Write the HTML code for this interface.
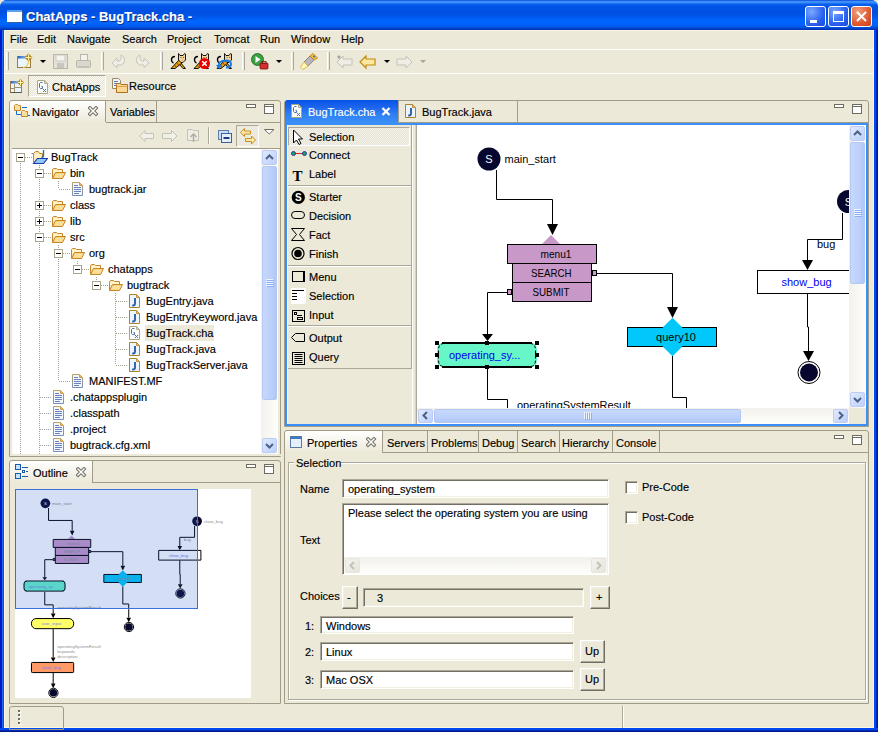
<!DOCTYPE html>
<html><head><meta charset="utf-8">
<style>
*{margin:0;padding:0;box-sizing:border-box}
html,body{width:878px;height:732px;overflow:hidden;background:#ECE9D8}
body{font-family:"Liberation Sans",sans-serif;font-size:11px;color:#000;position:relative}
.a{position:absolute}
.t{position:absolute;white-space:nowrap;line-height:13px;-webkit-text-stroke:0.15px currentColor}
</style></head><body>

<!-- window frame -->
<div class="a" style="left:0;top:0;width:878px;height:732px;background:#0A50E0;border-radius:7px 7px 0 0"></div>
<div class="a" style="left:0;top:0;width:878px;height:30px;border-radius:7px 7px 0 0;background:linear-gradient(#0A48DA 0px,#3C8EF8 1.5px,#3C8EF8 2.5px,#0A64F0 4px,#0055E6 6px,#0050E0 13px,#0058EE 17px,#0066FE 21px,#0062FA 25px,#0050DC 27.5px,#0034B8 29.5px,#0034B8 30px)"></div>
<div class="a" style="left:0;top:30px;width:4px;height:702px;background:linear-gradient(90deg,#0018C8 0 2px,#1C6EF0 2px 3px,#0050E0 3px 4px)"></div>
<div class="a" style="left:874px;top:30px;width:4px;height:702px;background:linear-gradient(90deg,#0048F0 0 2px,#0028B8 2px 3px,#001888 3px 4px)"></div>
<div class="a" style="left:0;top:728px;width:878px;height:4px;background:linear-gradient(#0048F0 0 2px,#0028B8 2px 3px,#001888 3px 4px)"></div>
<div class="a" style="left:4px;top:30px;width:870px;height:698px;background:#ECE9D8;border:1px solid #FFF6E0"></div>

<!-- title -->
<div class="a" style="left:7px;top:10px;width:15px;height:12px;background:#fff;border-top:2px solid #5AA0F0;box-shadow:1px 1px 0 #3060a0"></div>
<div class="t" style="left:26px;top:9px;font-size:13px;font-weight:bold;color:#fff;text-shadow:1px 1px 0 #0A2A80;line-height:15px">ChatApps - BugTrack.cha -</div>
<!-- title buttons -->
<div class="a" style="left:805px;top:6px;width:21px;height:21px;border:1px solid #fff;border-radius:3px;background:radial-gradient(circle at 30% 25%,#7AA8FF,#2A62F0 60%,#1A4AD8)"></div>
<div class="a" style="left:810px;top:20px;width:7px;height:3px;background:#fff"></div>
<div class="a" style="left:828px;top:6px;width:21px;height:21px;border:1px solid #fff;border-radius:3px;background:radial-gradient(circle at 30% 25%,#7AA8FF,#2A62F0 60%,#1A4AD8)"></div>
<div class="a" style="left:833px;top:11px;width:11px;height:11px;border:1px solid #fff;border-top-width:3px"></div>
<div class="a" style="left:851px;top:6px;width:21px;height:21px;border:1px solid #fff;border-radius:3px;background:radial-gradient(circle at 30% 25%,#F0A080,#E05A30 60%,#C84018)"></div>
<svg class="a" style="left:851px;top:6px" width="21" height="21"><path d="M6 6 L15 15 M15 6 L6 15" stroke="#fff" stroke-width="2"/></svg>

<!-- menu bar -->
<div class="a" style="left:4px;top:49px;width:870px;height:1px;background:#fff"></div>
<div class="t" style="left:10px;top:33px">File</div>
<div class="t" style="left:37px;top:33px">Edit</div>
<div class="t" style="left:67px;top:33px">Navigate</div>
<div class="t" style="left:122px;top:33px">Search</div>
<div class="t" style="left:167px;top:33px">Project</div>
<div class="t" style="left:214px;top:33px">Tomcat</div>
<div class="t" style="left:260px;top:33px">Run</div>
<div class="t" style="left:291px;top:33px">Window</div>
<div class="t" style="left:341px;top:33px">Help</div>

<!-- toolbar -->
<div class="a" style="left:4px;top:73px;width:870px;height:1px;background:#fff"></div>


<!-- toolbar items -->
<div class="a" style="left:6px;top:52px;width:3px;height:18px;border-left:1px solid #fff;border-right:1px solid #ACA899"></div>
<svg class="a" style="left:16px;top:53px" width="17" height="16"><defs><linearGradient id="nwg" x1="0" x2="1"><stop offset="0" stop-color="#2A66C0"/><stop offset="1" stop-color="#B0D4F8"/></linearGradient></defs><rect x="1.5" y="3.5" width="13" height="11" fill="#EAF6FC" stroke="#9A7A40"/><rect x="2" y="3" width="12" height="2.5" fill="url(#nwg)"/><path d="M12.5 8 Q12.5 13.5 7 14.5" stroke="#F8D050" fill="none" stroke-width="1.2"/><path d="M12.5 0.5 L16.5 4.5 L12.5 8.5 L8.5 4.5Z" fill="#B88A10"/><path d="M12.5 1.5 V7.5 M9.5 4.5 H15.5" stroke="#FFF0B0"/></svg>
<svg class="a" style="left:40px;top:60px" width="7" height="4"><path d="M0 0 L6 0 L3 3Z" fill="#000"/></svg>
<svg class="a" style="left:53px;top:54px" width="16" height="16"><rect x="0.5" y="0.5" width="14" height="14" fill="#E4E2D8" stroke="#B8B6AC"/><rect x="3" y="1" width="9" height="6" fill="#F4F3EE" stroke="#C4C2B8" stroke-width="0.8"/><rect x="4" y="9" width="7" height="5" fill="#C8C6BC"/></svg>
<svg class="a" style="left:76px;top:54px" width="16" height="16"><rect x="4.5" y="0.5" width="7" height="6" fill="#F4F3EE" stroke="#B8B6AC"/><rect x="0.5" y="6.5" width="14" height="7" rx="1" fill="#DAD8CE" stroke="#B8B6AC"/><rect x="2" y="12" width="11" height="2" fill="#C4C2B8"/></svg>
<div class="a" style="left:101px;top:52px;width:3px;height:18px;border-left:1px solid #fff;border-right:1px solid #ACA899"></div>
<svg class="a" style="left:111px;top:54px" width="16" height="16"><path d="M10 1 Q15 3 13 9 Q11 12 6 11 L6 14 L1 9 L6 4 L6 7 Q9 8 10 5Z" fill="#EEEDE6" stroke="#C8C6BC"/></svg>
<svg class="a" style="left:134px;top:54px" width="16" height="16"><path d="M6 1 Q1 3 3 9 Q5 12 10 11 L10 14 L15 9 L10 4 L10 7 Q7 8 6 5Z" fill="#EEEDE6" stroke="#C8C6BC"/></svg>
<div class="a" style="left:160px;top:52px;width:3px;height:18px;border-left:1px solid #fff;border-right:1px solid #ACA899"></div>

<svg class="a" style="left:170px;top:53px" width="17" height="17"><path d="M5 3.5 Q1.5 3.5 1.5 7 Q1.5 9.5 3.5 10" stroke="#000" stroke-width="1.4" fill="none"/><path d="M10 9 L15.5 15.5 L13 15.5 L9 11Z" fill="#E8A010" stroke="#000" stroke-width="0.9"/><path d="M1 15.5 L9 7 L12.5 9.5 L5 15.5Z" fill="#E8A010" stroke="#000" stroke-width="0.9"/><path d="M4.5 12.5 L6 13.5 M7 10.5 L8.5 11.5" stroke="#704000"/><path d="M8.5 0.5 L10 2.5 L13 2.5 L14.5 0.5 L15.5 1 L15.5 7 L13 9.5 L11 9.5 L8.5 7Z" fill="#F0D4A0" stroke="#000" stroke-width="0.9"/><path d="M10.5 4.5 H11.5 M13 4.5 H14 M12 7 H12.5" stroke="#806040"/></svg><svg class="a" style="left:193px;top:53px" width="17" height="17"><path d="M5 3.5 Q1.5 3.5 1.5 7 Q1.5 9.5 3.5 10" stroke="#000" stroke-width="1.4" fill="none"/><path d="M10 9 L15.5 15.5 L13 15.5 L9 11Z" fill="#E8A010" stroke="#000" stroke-width="0.9"/><path d="M1 15.5 L9 7 L12.5 9.5 L5 15.5Z" fill="#E8A010" stroke="#000" stroke-width="0.9"/><path d="M4.5 12.5 L6 13.5 M7 10.5 L8.5 11.5" stroke="#704000"/><path d="M8.5 0.5 L10 2.5 L13 2.5 L14.5 0.5 L15.5 1 L15.5 7 L13 9.5 L11 9.5 L8.5 7Z" fill="#F0D4A0" stroke="#000" stroke-width="0.9"/><path d="M10.5 4.5 H11.5 M13 4.5 H14 M12 7 H12.5" stroke="#806040"/><circle cx="11.5" cy="10.5" r="5.5" fill="#E80000"/><path d="M9.3 8.3 L13.7 12.7 M13.7 8.3 L9.3 12.7" stroke="#fff" stroke-width="1.6"/></svg><svg class="a" style="left:216px;top:53px" width="17" height="17"><path d="M5 3.5 Q1.5 3.5 1.5 7 Q1.5 9.5 3.5 10" stroke="#000" stroke-width="1.4" fill="none"/><path d="M10 9 L15.5 15.5 L13 15.5 L9 11Z" fill="#E8A010" stroke="#000" stroke-width="0.9"/><path d="M1 15.5 L9 7 L12.5 9.5 L5 15.5Z" fill="#E8A010" stroke="#000" stroke-width="0.9"/><path d="M4.5 12.5 L6 13.5 M7 10.5 L8.5 11.5" stroke="#704000"/><path d="M8.5 0.5 L10 2.5 L13 2.5 L14.5 0.5 L15.5 1 L15.5 7 L13 9.5 L11 9.5 L8.5 7Z" fill="#F0D4A0" stroke="#000" stroke-width="0.9"/><path d="M10.5 4.5 H11.5 M13 4.5 H14 M12 7 H12.5" stroke="#806040"/><path d="M2.5 14 Q2 8 9 7.5 Q15 7.5 15 11 Q15 14.5 10 14.5" stroke="#1A7AE8" stroke-width="2" fill="none"/><path d="M0 12 L3 16 L6 12Z" fill="#1A7AE8"/></svg>
<div class="a" style="left:242px;top:52px;width:3px;height:18px;border-left:1px solid #fff;border-right:1px solid #ACA899"></div>
<svg class="a" style="left:251px;top:53px" width="18" height="18"><circle cx="6.5" cy="6.5" r="6" fill="#3AA040" stroke="#1A6020" stroke-width="0.8"/><path d="M4.5 3 L9.5 6.5 L4.5 10Z" fill="#fff"/><rect x="9" y="10" width="8" height="6" rx="1" fill="#D03030" stroke="#801010" stroke-width="0.8"/><rect x="11" y="8.5" width="4" height="2" fill="none" stroke="#801010" stroke-width="0.8"/></svg>
<svg class="a" style="left:276px;top:60px" width="7" height="4"><path d="M0 0 L6 0 L3 3Z" fill="#000"/></svg>
<div class="a" style="left:291px;top:52px;width:3px;height:18px;border-left:1px solid #fff;border-right:1px solid #ACA899"></div>
<svg class="a" style="left:300px;top:53px" width="18" height="18"><path d="M10 3 L14 7 L8 13 L4 9Z" fill="#B8B4C0" stroke="#807060" stroke-width="0.8"/><path d="M10 3 L13 0.5 L17.5 5 L14 7Z" fill="#F4C040" stroke="#C08010" stroke-width="0.9"/><circle cx="14" cy="3.5" r="0.9" fill="#3060C0"/><path d="M4 9 L8 13 L3 16.5 L0.5 14Z" fill="#FFF8C0" stroke="#E8B030" stroke-width="0.9"/></svg>
<div class="a" style="left:327px;top:52px;width:3px;height:18px;border-left:1px solid #fff;border-right:1px solid #ACA899"></div>
<svg class="a" style="left:336px;top:54px" width="18" height="16"><path d="M1 8 L7 2 L7 5 L16 5 L16 11 L7 11 L7 14Z" fill="#EEEDE6" stroke="#C4C2B8"/><path d="M2 2 L4 4 M4 2 L2 4 M3 1 L3 5 M1 3 L5 3" stroke="#A0A0A0" stroke-width="0.8"/></svg>
<svg class="a" style="left:359px;top:54px" width="18" height="16"><path d="M1 8 L7 2 L7 5 L16 5 L16 11 L7 11 L7 14Z" fill="#FCE8A0" stroke="#C08A10" stroke-width="1.2"/></svg>
<svg class="a" style="left:384px;top:60px" width="7" height="4"><path d="M0 0 L6 0 L3 3Z" fill="#000"/></svg>
<svg class="a" style="left:396px;top:54px" width="18" height="16"><path d="M16 8 L10 2 L10 5 L1 5 L1 11 L10 11 L10 14Z" fill="#EEEDE6" stroke="#C4C2B8"/></svg>
<svg class="a" style="left:420px;top:60px" width="7" height="4"><path d="M0 0 L6 0 L3 3Z" fill="#A8A698"/></svg>

<!-- perspective bar -->


<!-- navigator panel -->
<div class="a" style="left:9px;top:100px;width:272px;height:357px;border:1px solid #A09C88;border-radius:3px 3px 0 0;background:#ECE9D8"></div>

<!-- outline panel -->
<div class="a" style="left:9px;top:460px;width:272px;height:244px;border:1px solid #A09C88;border-radius:3px 3px 0 0;background:#ECE9D8"></div>

<!-- editor panel -->
<div class="a" style="left:284px;top:100px;width:585px;height:327px;border:1px solid #A09C88;border-radius:3px 3px 0 0;background:#ECE9D8"></div>

<!-- properties panel -->
<div class="a" style="left:284px;top:430px;width:585px;height:274px;border:1px solid #A09C88;border-radius:3px 3px 0 0;background:#ECE9D8"></div>

<!-- status bar -->
<div class="a" style="left:9px;top:706px;width:55px;height:24px;border:1px solid #A09C88;border-radius:3px 3px 0 0"></div><div class="a" style="left:18px;top:710px;width:2px;height:2px;background:#6E6C60;box-shadow:1px 1px 0 #fff"></div><div class="a" style="left:18px;top:714px;width:2px;height:2px;background:#6E6C60;box-shadow:1px 1px 0 #fff"></div><div class="a" style="left:18px;top:718px;width:2px;height:2px;background:#6E6C60;box-shadow:1px 1px 0 #fff"></div><div class="a" style="left:18px;top:722px;width:2px;height:2px;background:#6E6C60;box-shadow:1px 1px 0 #fff"></div><div class="a" style="left:622px;top:706px;width:2px;height:22px;border-left:1px solid #ACA899;border-right:1px solid #fff"></div>


<svg width="0" height="0" style="position:absolute"><defs>
<g id="fold"><path d="M1.5 10.5 L1.5 1.5 L2.5 0.5 L5.5 0.5 L6.5 1.5 L11.5 1.5 L11.5 4.5" fill="#FCE8B0" stroke="#C8862A"/><path d="M2 2 H11 V5 H2Z" fill="#FFF4D0"/><path d="M1.5 10.5 L4.5 4.5 L14.5 4.5 L11.5 10.5Z" fill="#F8D480" stroke="#C8862A"/><path d="M5 6 H13 L11 9.5 H3.5Z" fill="#FCE09A"/></g>
<g id="page"><defs><linearGradient id="pgb" x1="0" y1="0" x2="0" y2="1"><stop offset="0" stop-color="#B8A460"/><stop offset="1" stop-color="#7A8CB8"/></linearGradient></defs><path d="M0.5 0.5 L7.5 0.5 L10.5 3.5 L10.5 13.5 L0.5 13.5Z" fill="#F2F6FE" stroke="url(#pgb)"/><path d="M7.5 0.5 L7.5 3.5 L10.5 3.5Z" fill="#E8B860" stroke="#D0A050"/><path d="M2 3.5 H6 M2 5.5 H9 M2 7.5 H9 M2 9.5 H9 M2 11.5 H7" stroke="#6A80B8"/></g>
<g id="jpage"><path d="M0.5 0.5 L7.5 0.5 L10.5 3.5 L10.5 13.5 L0.5 13.5Z" fill="#EEF4FC" stroke="#A88428"/><path d="M7.5 0.5 L7.5 3.5 L10.5 3.5Z" fill="#E8C070" stroke="#C09040"/><path d="M6 4 V9.5 Q6 11.5 4 11.5 L3.2 11.5" stroke="#2A60A8" stroke-width="1.9" fill="none"/></g>
<g id="gpage"><path d="M0.5 0.5 L7.5 0.5 L10.5 3.5 L10.5 13.5 L0.5 13.5Z" fill="#FCFCF8" stroke="#A8A880"/><path d="M7.5 0.5 L7.5 3.5 L10.5 3.5Z" fill="#E0E0C0" stroke="#B0B090"/><path d="M5.5 2.5 H3.5 L2.5 3.5 V7.5 L3.5 8.5 H5.5 V6.5 H4.5" stroke="#4A70B0" fill="none"/><path d="M6 9h1v1h-1zM8 9h1v1h-1zM7 10h1v1h-1zM6 11h1v1h-1zM8 11h1v1h-1z" fill="#4A70B0"/></g>
<g id="minbtn"><rect x="0.5" y="0.5" width="9" height="3" fill="#fff" stroke="#6E6C60"/></g>
<g id="maxbtn"><rect x="0.5" y="0.5" width="9" height="9" fill="#fff" stroke="#6E6C60"/><path d="M0.5 2.5 H9.5" stroke="#6E6C60"/></g>
</defs></svg>
<div class="a" style="left:10px;top:101px;width:96px;height:22px;border-radius:3px 0 0 0;background:linear-gradient(#FFFFFF,#ECE9D8)"></div>
<div class="a" style="left:105px;top:101px;width:1px;height:21px;background:#A09C88"></div>
<div class="a" style="left:156px;top:101px;width:1px;height:21px;background:#A09C88"></div>
<div class="a" style="left:106px;top:122px;width:174px;height:1px;background:#A09C88"></div>
<svg class="a" style="left:14px;top:104px" width="16" height="13"><path d="M2.5 6 V10.5 H7" stroke="#1A6AC8" fill="none"/><path d="M8 3.5 H13 M14 11.5 H16" stroke="#1A6AC8"/><path d="M0.5 6.5 V1.5 L1.5 0.5 H3.5 L4.5 1.5 H6.5 V6.5Z" fill="#FCE0A0" stroke="#C8862A"/><path d="M7.5 12.5 V7.5 L8.5 6.5 H10.5 L11.5 7.5 H13.5 V12.5Z" fill="#FCE0A0" stroke="#C8862A"/></svg>
<div class="t" style="left:32px;top:106px">Navigator</div>
<svg class="a" style="left:88px;top:106px" width="11" height="11"><path d="M2 2 L8 8 M8 2 L2 8" stroke="#6E6C60" stroke-width="3.4" stroke-linecap="square"/><path d="M2 2 L8 8 M8 2 L2 8" stroke="#fff" stroke-width="1.5" stroke-linecap="square"/></svg>
<div class="t" style="left:110px;top:106px">Variables</div>
<svg class="a" style="left:246px;top:104px" width="10" height="4"><use href="#minbtn"/></svg>
<svg class="a" style="left:264px;top:104px" width="10" height="10"><use href="#maxbtn"/></svg>
<svg class="a" style="left:139px;top:130px" width="16" height="12"><path d="M0.5 6 L6 0.5 L6 3.5 L14.5 3.5 L14.5 8.5 L6 8.5 L6 11.5Z" fill="#F0EFE8" stroke="#C4C2B4"/></svg>
<svg class="a" style="left:162px;top:130px" width="16" height="12"><path d="M15 6 L9.5 0.5 L9.5 3.5 L0.5 3.5 L0.5 8.5 L9.5 8.5 L9.5 11.5Z" fill="#F0EFE8" stroke="#C4C2B4"/></svg>
<svg class="a" style="left:187px;top:129px" width="14" height="14"><path d="M0.5 2.5 L0.5 0.5 L5 0.5 L6 1.5 L11.5 1.5 L11.5 11.5 L0.5 11.5Z" fill="#ECEBE4" stroke="#C4C2B4"/><path d="M6.5 13 L6.5 6 M3.5 8 L6.5 5 L9.5 8" stroke="#B0AEA0" stroke-width="1.5" fill="none"/></svg>
<div class="a" style="left:208px;top:127px;width:2px;height:17px;border-left:1px solid #ACA899;border-right:1px solid #fff"></div>
<svg class="a" style="left:218px;top:130px" width="14" height="13"><rect x="0.5" y="0.5" width="10" height="9" fill="#C8DCF4" stroke="#5A80B0"/><rect x="3.5" y="3.5" width="10" height="9" fill="#E4EEFA" stroke="#3A60A0"/><path d="M5.5 8 H11.5" stroke="#203C80" stroke-width="2"/></svg>
<div class="a" style="left:236px;top:125px;width:23px;height:22px;border:1px solid;border-color:#ACA899 #fff #fff #ACA899;background:repeating-conic-gradient(#F4F2EA 0 25%,#E4E1D2 0 50%) 0 0/2px 2px"></div>
<svg class="a" style="left:240px;top:128px" width="17" height="17"><path d="M0.5 4.5 L4.5 0.5 V3 H10.5 V6 H4.5 V8.5Z" fill="#FCE8A8" stroke="#C89020"/><path d="M15.5 12 L11.5 8 V10.5 H5.5 V13.5 H11.5 V16Z" fill="#FCE8A8" stroke="#C89020"/></svg>
<svg class="a" style="left:264px;top:129px" width="11" height="6"><path d="M0.5 0.5 L10 0.5 L5.25 5Z" fill="#fff" stroke="#6E6C60"/></svg>
<div class="a" style="left:12px;top:148px;width:268px;height:1px;background:#A09C88"></div>
<div class="a" style="left:12px;top:149px;width:249px;height:305px;background:#fff"></div>
<div class="a" style="left:261px;top:149px;width:17px;height:305px;background:linear-gradient(90deg,#F3F1EC,#FEFEFB)"></div>
<div class="a" style="left:262px;top:150px;width:15px;height:15px;border:1px solid #BCCCF4;border-radius:2px;background:linear-gradient(135deg,#E0EAFE,#BCD0FA)"></div>
<svg class="a" style="left:265px;top:154px" width="9" height="6"><path d="M1 5 L4.5 1.5 L8 5" stroke="#4D6185" stroke-width="2" fill="none"/></svg>
<div class="a" style="left:262px;top:166px;width:15px;height:234px;border:1px solid #B4C8F6;border-radius:2px;background:linear-gradient(90deg,#C8D8FC,#BCD0FA 60%,#B0C8F8)"></div>
<svg class="a" style="left:266px;top:279px" width="8" height="8"><path d="M0 0.5 H7 M0 2.5 H7 M0 4.5 H7 M0 6.5 H7" stroke="#EEF4FE"/><path d="M1 1.5 H8 M1 3.5 H8 M1 5.5 H8 M1 7.5 H8" stroke="#8CB0F8"/></svg>
<div class="a" style="left:262px;top:438px;width:15px;height:15px;border:1px solid #BCCCF4;border-radius:2px;background:linear-gradient(135deg,#E0EAFE,#BCD0FA)"></div>
<svg class="a" style="left:265px;top:443px" width="9" height="6"><path d="M1 1 L4.5 4.5 L8 1" stroke="#4D6185" stroke-width="2" fill="none"/></svg>
<div class="a" style="left:261px;top:454px;width:20px;height:2px;background:#ECE9D8"></div>
<div class="a" style="left:0;top:0;width:261px;height:454px;overflow:hidden">
<div class="a" style="left:25px;top:157px;width:7px;height:1px;background:repeating-linear-gradient(90deg,#A0A090 0 1px,transparent 1px 2px)"></div>
<div class="a" style="left:20px;top:157px;width:1px;height:297px;background:repeating-linear-gradient(180deg,#A0A090 0 1px,transparent 1px 2px)"></div>
<div class="a" style="left:16px;top:153px;width:9px;height:9px;border:1px solid #A8A490;background:#fff"></div>
<div class="a" style="left:18px;top:157px;width:5px;height:1px;background:#000"></div>
<svg class="a" style="left:31px;top:150px" width="17" height="15"><path d="M2.5 12.5 L2.5 3.5 L4.5 1.5 L7.5 1.5 L8.5 3.5 L11.5 3.5 L11.5 7" fill="#FCE8B0" stroke="#C8862A"/><path d="M0.5 3.5 H2.5" stroke="#807090"/><path d="M3 4 H11 V8 H3Z" fill="#FFF0C0"/><path d="M12.5 0 V5.5 Q12.5 7.5 10.5 7.5" stroke="#2A6AB0" stroke-width="1.3" fill="none"/><path d="M2.5 13.5 L6.5 8.5 L16.5 8.5 L12.5 13.5Z" fill="#90C8F8" stroke="#1A3AB0" stroke-width="1.2"/></svg>
<div class="t" style="left:51px;top:151px">BugTrack</div>
<div class="a" style="left:44px;top:173px;width:7px;height:1px;background:repeating-linear-gradient(90deg,#A0A090 0 1px,transparent 1px 2px)"></div>
<div class="a" style="left:39px;top:173px;width:1px;height:288px;background:repeating-linear-gradient(180deg,#A0A090 0 1px,transparent 1px 2px)"></div>
<div class="a" style="left:39px;top:165px;width:1px;height:8px;background:repeating-linear-gradient(180deg,#A0A090 0 1px,transparent 1px 2px)"></div>
<div class="a" style="left:35px;top:169px;width:9px;height:9px;border:1px solid #A8A490;background:#fff"></div>
<div class="a" style="left:37px;top:173px;width:5px;height:1px;background:#000"></div>
<svg class="a" style="left:51px;top:168px" width="16" height="13"><use href="#fold"/></svg>
<div class="t" style="left:70px;top:167px">bin</div>
<div class="a" style="left:59px;top:189px;width:11px;height:1px;background:repeating-linear-gradient(90deg,#A0A090 0 1px,transparent 1px 2px)"></div>
<div class="a" style="left:58px;top:181px;width:1px;height:8px;background:repeating-linear-gradient(180deg,#A0A090 0 1px,transparent 1px 2px)"></div>
<svg class="a" style="left:72px;top:182px" width="12" height="14"><use href="#page"/></svg>
<div class="t" style="left:89px;top:183px">bugtrack.jar</div>
<div class="a" style="left:44px;top:205px;width:7px;height:1px;background:repeating-linear-gradient(90deg,#A0A090 0 1px,transparent 1px 2px)"></div>
<div class="a" style="left:39px;top:205px;width:1px;height:256px;background:repeating-linear-gradient(180deg,#A0A090 0 1px,transparent 1px 2px)"></div>
<div class="a" style="left:35px;top:201px;width:9px;height:9px;border:1px solid #A8A490;background:#fff"></div>
<div class="a" style="left:37px;top:205px;width:5px;height:1px;background:#000"></div>
<div class="a" style="left:39px;top:203px;width:1px;height:5px;background:#000"></div>
<svg class="a" style="left:51px;top:200px" width="16" height="13"><use href="#fold"/></svg>
<div class="t" style="left:70px;top:199px">class</div>
<div class="a" style="left:44px;top:221px;width:7px;height:1px;background:repeating-linear-gradient(90deg,#A0A090 0 1px,transparent 1px 2px)"></div>
<div class="a" style="left:39px;top:221px;width:1px;height:240px;background:repeating-linear-gradient(180deg,#A0A090 0 1px,transparent 1px 2px)"></div>
<div class="a" style="left:35px;top:217px;width:9px;height:9px;border:1px solid #A8A490;background:#fff"></div>
<div class="a" style="left:37px;top:221px;width:5px;height:1px;background:#000"></div>
<div class="a" style="left:39px;top:219px;width:1px;height:5px;background:#000"></div>
<svg class="a" style="left:51px;top:216px" width="16" height="13"><use href="#fold"/></svg>
<div class="t" style="left:70px;top:215px">lib</div>
<div class="a" style="left:44px;top:237px;width:7px;height:1px;background:repeating-linear-gradient(90deg,#A0A090 0 1px,transparent 1px 2px)"></div>
<div class="a" style="left:39px;top:237px;width:1px;height:224px;background:repeating-linear-gradient(180deg,#A0A090 0 1px,transparent 1px 2px)"></div>
<div class="a" style="left:35px;top:233px;width:9px;height:9px;border:1px solid #A8A490;background:#fff"></div>
<div class="a" style="left:37px;top:237px;width:5px;height:1px;background:#000"></div>
<svg class="a" style="left:51px;top:232px" width="16" height="13"><use href="#fold"/></svg>
<div class="t" style="left:70px;top:231px">src</div>
<div class="a" style="left:63px;top:253px;width:7px;height:1px;background:repeating-linear-gradient(90deg,#A0A090 0 1px,transparent 1px 2px)"></div>
<div class="a" style="left:58px;top:253px;width:1px;height:128px;background:repeating-linear-gradient(180deg,#A0A090 0 1px,transparent 1px 2px)"></div>
<div class="a" style="left:58px;top:245px;width:1px;height:8px;background:repeating-linear-gradient(180deg,#A0A090 0 1px,transparent 1px 2px)"></div>
<div class="a" style="left:54px;top:249px;width:9px;height:9px;border:1px solid #A8A490;background:#fff"></div>
<div class="a" style="left:56px;top:253px;width:5px;height:1px;background:#000"></div>
<svg class="a" style="left:70px;top:248px" width="16" height="13"><use href="#fold"/></svg>
<div class="t" style="left:89px;top:247px">org</div>
<div class="a" style="left:82px;top:269px;width:7px;height:1px;background:repeating-linear-gradient(90deg,#A0A090 0 1px,transparent 1px 2px)"></div>
<div class="a" style="left:77px;top:261px;width:1px;height:8px;background:repeating-linear-gradient(180deg,#A0A090 0 1px,transparent 1px 2px)"></div>
<div class="a" style="left:73px;top:265px;width:9px;height:9px;border:1px solid #A8A490;background:#fff"></div>
<div class="a" style="left:75px;top:269px;width:5px;height:1px;background:#000"></div>
<svg class="a" style="left:89px;top:264px" width="16" height="13"><use href="#fold"/></svg>
<div class="t" style="left:108px;top:263px">chatapps</div>
<div class="a" style="left:101px;top:285px;width:7px;height:1px;background:repeating-linear-gradient(90deg,#A0A090 0 1px,transparent 1px 2px)"></div>
<div class="a" style="left:96px;top:277px;width:1px;height:8px;background:repeating-linear-gradient(180deg,#A0A090 0 1px,transparent 1px 2px)"></div>
<div class="a" style="left:92px;top:281px;width:9px;height:9px;border:1px solid #A8A490;background:#fff"></div>
<div class="a" style="left:94px;top:285px;width:5px;height:1px;background:#000"></div>
<svg class="a" style="left:108px;top:280px" width="16" height="13"><use href="#fold"/></svg>
<div class="t" style="left:127px;top:279px">bugtrack</div>
<div class="a" style="left:116px;top:301px;width:11px;height:1px;background:repeating-linear-gradient(90deg,#A0A090 0 1px,transparent 1px 2px)"></div>
<div class="a" style="left:115px;top:301px;width:1px;height:64px;background:repeating-linear-gradient(180deg,#A0A090 0 1px,transparent 1px 2px)"></div>
<div class="a" style="left:115px;top:293px;width:1px;height:8px;background:repeating-linear-gradient(180deg,#A0A090 0 1px,transparent 1px 2px)"></div>
<svg class="a" style="left:129px;top:294px" width="12" height="14"><use href="#jpage"/></svg>
<div class="t" style="left:146px;top:295px">BugEntry.java</div>
<div class="a" style="left:116px;top:317px;width:11px;height:1px;background:repeating-linear-gradient(90deg,#A0A090 0 1px,transparent 1px 2px)"></div>
<div class="a" style="left:115px;top:317px;width:1px;height:48px;background:repeating-linear-gradient(180deg,#A0A090 0 1px,transparent 1px 2px)"></div>
<svg class="a" style="left:129px;top:310px" width="12" height="14"><use href="#jpage"/></svg>
<div class="t" style="left:146px;top:311px">BugEntryKeyword.java</div>
<div class="a" style="left:116px;top:333px;width:11px;height:1px;background:repeating-linear-gradient(90deg,#A0A090 0 1px,transparent 1px 2px)"></div>
<div class="a" style="left:115px;top:333px;width:1px;height:32px;background:repeating-linear-gradient(180deg,#A0A090 0 1px,transparent 1px 2px)"></div>
<svg class="a" style="left:129px;top:326px" width="12" height="14"><use href="#gpage"/></svg>
<div class="a" style="left:145px;top:325px;width:69px;height:16px;background:#ECE9D8"></div>
<div class="t" style="left:146px;top:327px">BugTrack.cha</div>
<div class="a" style="left:116px;top:349px;width:11px;height:1px;background:repeating-linear-gradient(90deg,#A0A090 0 1px,transparent 1px 2px)"></div>
<div class="a" style="left:115px;top:349px;width:1px;height:16px;background:repeating-linear-gradient(180deg,#A0A090 0 1px,transparent 1px 2px)"></div>
<svg class="a" style="left:129px;top:342px" width="12" height="14"><use href="#jpage"/></svg>
<div class="t" style="left:146px;top:343px">BugTrack.java</div>
<div class="a" style="left:116px;top:365px;width:11px;height:1px;background:repeating-linear-gradient(90deg,#A0A090 0 1px,transparent 1px 2px)"></div>
<svg class="a" style="left:129px;top:358px" width="12" height="14"><use href="#jpage"/></svg>
<div class="t" style="left:146px;top:359px">BugTrackServer.java</div>
<div class="a" style="left:59px;top:381px;width:11px;height:1px;background:repeating-linear-gradient(90deg,#A0A090 0 1px,transparent 1px 2px)"></div>
<svg class="a" style="left:72px;top:374px" width="12" height="14"><use href="#page"/></svg>
<div class="t" style="left:89px;top:375px">MANIFEST.MF</div>
<div class="a" style="left:40px;top:397px;width:11px;height:1px;background:repeating-linear-gradient(90deg,#A0A090 0 1px,transparent 1px 2px)"></div>
<div class="a" style="left:39px;top:397px;width:1px;height:64px;background:repeating-linear-gradient(180deg,#A0A090 0 1px,transparent 1px 2px)"></div>
<svg class="a" style="left:53px;top:390px" width="12" height="14"><use href="#page"/></svg>
<div class="t" style="left:70px;top:391px">.chatappsplugin</div>
<div class="a" style="left:40px;top:413px;width:11px;height:1px;background:repeating-linear-gradient(90deg,#A0A090 0 1px,transparent 1px 2px)"></div>
<div class="a" style="left:39px;top:413px;width:1px;height:48px;background:repeating-linear-gradient(180deg,#A0A090 0 1px,transparent 1px 2px)"></div>
<svg class="a" style="left:53px;top:406px" width="12" height="14"><use href="#page"/></svg>
<div class="t" style="left:70px;top:407px">.classpath</div>
<div class="a" style="left:40px;top:429px;width:11px;height:1px;background:repeating-linear-gradient(90deg,#A0A090 0 1px,transparent 1px 2px)"></div>
<div class="a" style="left:39px;top:429px;width:1px;height:32px;background:repeating-linear-gradient(180deg,#A0A090 0 1px,transparent 1px 2px)"></div>
<svg class="a" style="left:53px;top:422px" width="12" height="14"><use href="#page"/></svg>
<div class="t" style="left:70px;top:423px">.project</div>
<div class="a" style="left:40px;top:445px;width:11px;height:1px;background:repeating-linear-gradient(90deg,#A0A090 0 1px,transparent 1px 2px)"></div>
<div class="a" style="left:39px;top:445px;width:1px;height:16px;background:repeating-linear-gradient(180deg,#A0A090 0 1px,transparent 1px 2px)"></div>
<svg class="a" style="left:53px;top:438px" width="12" height="14"><use href="#page"/></svg>
<div class="t" style="left:70px;top:439px">bugtrack.cfg.xml</div>
<div class="a" style="left:40px;top:461px;width:11px;height:1px;background:repeating-linear-gradient(90deg,#A0A090 0 1px,transparent 1px 2px)"></div>
<svg class="a" style="left:53px;top:454px" width="12" height="14"><use href="#page"/></svg>
<div class="t" style="left:70px;top:455px">build.xml</div>
</div>
<div class="a" style="left:285px;top:100px;width:113px;height:25px;border-radius:3px 0 0 0;background:linear-gradient(#0454E6 0px,#1A62EC 6px,#2F7EF2 14px,#3A90F8 23px)"></div>
<svg class="a" style="left:291px;top:104px" width="12" height="14"><use href="#gpage"/></svg>
<div class="t" style="left:308px;top:106px;color:#fff">BugTrack.cha</div>
<svg class="a" style="left:381px;top:107px" width="10" height="9"><path d="M1.5 1 L8.5 8 M8.5 1 L1.5 8" stroke="#fff" stroke-width="2.2"/></svg>
<div class="a" style="left:398px;top:101px;width:1px;height:21px;background:#A09C88"></div>
<div class="a" style="left:517px;top:101px;width:1px;height:21px;background:#A09C88"></div>
<div class="a" style="left:398px;top:122px;width:470px;height:1px;background:#A09C88"></div>
<svg class="a" style="left:405px;top:104px" width="12" height="14"><use href="#jpage"/></svg>
<div class="t" style="left:422px;top:106px">BugTrack.java</div>
<svg class="a" style="left:834px;top:104px" width="10" height="4"><use href="#minbtn"/></svg>
<svg class="a" style="left:852px;top:104px" width="10" height="10"><use href="#maxbtn"/></svg>
<div class="a" style="left:285px;top:123px;width:583px;height:303px;background:#3A90F8"></div>
<div class="a" style="left:287px;top:125px;width:579px;height:299px;background:#ECE9D8"></div>
<div class="a" style="left:412px;top:125px;width:1px;height:299px;background:#fff"></div>
<div class="a" style="left:287px;top:125px;width:1px;height:299px;background:#fff"></div>
<div class="a" style="left:411px;top:125px;width:1px;height:244px;background:#ACA899"></div>
<div class="a" style="left:415px;top:125px;width:1px;height:299px;background:#D8D4C4"></div>
<div class="a" style="left:288px;top:185px;width:123px;height:1px;background:#ACA899"></div>
<div class="a" style="left:288px;top:186px;width:123px;height:1px;background:#fff"></div>
<div class="a" style="left:288px;top:265px;width:123px;height:1px;background:#ACA899"></div>
<div class="a" style="left:288px;top:266px;width:123px;height:1px;background:#fff"></div>
<div class="a" style="left:288px;top:325px;width:123px;height:1px;background:#ACA899"></div>
<div class="a" style="left:288px;top:326px;width:123px;height:1px;background:#fff"></div>
<div class="a" style="left:288px;top:368px;width:123px;height:1px;background:#ACA899"></div>
<div class="a" style="left:288px;top:127px;width:122px;height:19px;border:1px solid;border-color:#ACA899 #fff #fff #ACA899;background:repeating-conic-gradient(#F6F4EE 0 25%,#E4E1D2 0 50%) 0 0/2px 2px"></div>
<svg class="a" style="left:291px;top:129px" width="16" height="16"><path d="M2.5 1 L2.5 14 L5.5 11 L8 15.5 L10 14.5 L7.5 10 L11.5 10Z" fill="#fff" stroke="#000"/></svg>
<div class="t" style="left:309px;top:131px">Selection</div>
<svg class="a" style="left:291px;top:147px" width="16" height="16"><path d="M4 6.5 H12" stroke="#E02020"/><circle cx="2.5" cy="6.5" r="2" fill="#20A070" stroke="#1A2A9A" stroke-width="0.9"/><circle cx="13.5" cy="6.5" r="2" fill="#20A070" stroke="#1A2A9A" stroke-width="0.9"/></svg>
<div class="t" style="left:309px;top:149px">Connect</div>
<svg class="a" style="left:291px;top:166px" width="16" height="16"><text x="1.5" y="15" font-family="Liberation Serif" font-weight="bold" font-size="15">T</text></svg>
<div class="t" style="left:309px;top:168px">Label</div>
<svg class="a" style="left:291px;top:189px" width="16" height="16"><circle cx="7.3" cy="8.4" r="6.6" fill="#000"/><text x="7.3" y="12.2" text-anchor="middle" font-size="10" font-weight="bold" fill="#fff" font-family="Liberation Sans">S</text></svg>
<div class="t" style="left:309px;top:191px">Starter</div>
<svg class="a" style="left:291px;top:208px" width="16" height="16"><rect x="0.5" y="3.5" width="13" height="7" rx="3.5" fill="none" stroke="#000"/></svg>
<div class="t" style="left:309px;top:210px">Decision</div>
<svg class="a" style="left:291px;top:227px" width="16" height="16"><path d="M0.5 1.5 H13.5 L8.5 7.5 L13.5 13.5 H0.5 L5.5 7.5Z" fill="none" stroke="#000"/></svg>
<div class="t" style="left:309px;top:229px">Fact</div>
<svg class="a" style="left:291px;top:246px" width="16" height="16"><circle cx="7" cy="7.5" r="6" fill="none" stroke="#000" stroke-width="1.2"/><circle cx="7" cy="7.5" r="3.8" fill="#000"/></svg>
<div class="t" style="left:309px;top:248px">Finish</div>
<svg class="a" style="left:291px;top:269px" width="16" height="16"><rect x="1.5" y="2.5" width="12" height="10" fill="none" stroke="#000"/><rect x="12" y="2" width="2" height="11" fill="#000"/></svg>
<div class="t" style="left:309px;top:271px">Menu</div>
<svg class="a" style="left:291px;top:288px" width="16" height="16"><rect x="-1" y="0" width="16" height="16" fill="#fff"/><path d="M1 2.5 H13 M1 5.5 H6 M1 8.5 H6 M1 11.5 H6" stroke="#000" stroke-width="1.1"/></svg>
<div class="t" style="left:309px;top:290px">Selection</div>
<svg class="a" style="left:291px;top:307px" width="16" height="16"><rect x="1.5" y="3.5" width="12" height="11" fill="none" stroke="#000"/><rect x="3.5" y="5.5" width="2" height="2" fill="none" stroke="#000"/><path d="M6 8.5 H11" stroke="#000"/><rect x="6.5" y="10.5" width="5" height="2" fill="none" stroke="#000"/></svg>
<div class="t" style="left:309px;top:309px">Input</div>
<svg class="a" style="left:291px;top:330px" width="16" height="16"><path d="M13.5 3.5 H4.5 L0.5 7.5 L4.5 11.5 H13.5Z" fill="none" stroke="#000"/></svg>
<div class="t" style="left:309px;top:332px">Output</div>
<svg class="a" style="left:291px;top:349px" width="16" height="16"><rect x="1.5" y="3.5" width="12" height="12" fill="none" stroke="#000"/><path d="M3.5 5.5 H11.5 M3.5 7.5 H11.5 M3.5 9.5 H11.5 M3.5 11.5 H11.5 M3.5 13.5 H11.5" stroke="#000"/></svg>
<div class="t" style="left:309px;top:351px">Query</div>
<div class="a" style="left:416px;top:125px;width:450px;height:299px;background:#fff"></div>
<div class="a" style="left:416px;top:125px;width:1px;height:299px;background:#ACA899"></div>
<svg class="a" style="left:0;top:0;font-family:Liberation Sans" width="878" height="732" viewBox="0 0 878 732"><g clip-path="url(#cvclip)"><clipPath id="cvclip"><rect x="417" y="125" width="433" height="283"/></clipPath><defs><marker id="arr" markerWidth="11" markerHeight="11" refX="5.5" refY="10" orient="0" markerUnits="userSpaceOnUse"><path d="M0 0 L11 0 L5.5 11Z" fill="#000"/></marker></defs><circle cx="489" cy="159" r="11.5" fill="#06062E"/><text x="489" y="163" text-anchor="middle" fill="#fff" font-size="11">S</text><text x="504.5" y="163" font-size="11">main_start</text><path d="M496.5 170 V199.5 H552.5 V224" fill="none" stroke="#000"/><path d="M547 224 H558 L552.5 235Z"/><path d="M542 244 L551 235 L560 244Z" fill="#C898C8"/><rect x="507.5" y="244.5" width="89" height="19" fill="#C898C8" stroke="#000"/><rect x="512.5" y="263.5" width="79" height="19" fill="#C898C8" stroke="#000"/><rect x="512.5" y="282.5" width="79" height="19" fill="#C898C8" stroke="#000"/><text x="540.5" y="258" font-size="11" textLength="31" lengthAdjust="spacingAndGlyphs">menu1</text><text x="531" y="277" font-size="11" textLength="40.5" lengthAdjust="spacingAndGlyphs">SEARCH</text><text x="532.5" y="296" font-size="11" textLength="37" lengthAdjust="spacingAndGlyphs">SUBMIT</text><rect x="592.5" y="270.5" width="4" height="5" fill="#C898C8" stroke="#000"/><rect x="507.5" y="289.5" width="4" height="5" fill="#C898C8" stroke="#000"/><path d="M597 273.5 H672.5 V307" fill="none" stroke="#000"/><path d="M667 307 H678 L672.5 318Z"/><path d="M507 292.5 H487.5 V334" fill="none" stroke="#000"/><path d="M482 334 H493 L487.5 341Z"/><path d="M443 343 H531 Q537 343 537 350 V360 Q537 367 531 367 H443 Q437 367 437 360 V350 Q437 343 443 343Z" fill="#66F6C8"/><path d="M442 343 H532 M442 367 H532" stroke="#000" stroke-width="2"/><path d="M444 343.5 Q438.5 343.5 438.5 350 V360 Q438.5 366.5 444 366.5 M530 343.5 Q535.5 343.5 535.5 350 V360 Q535.5 366.5 530 366.5" fill="none" stroke="#000" stroke-dasharray="3 2"/><rect x="435" y="341" width="4" height="4" fill="#000"/><rect x="485" y="341" width="4" height="4" fill="#000"/><rect x="535" y="341" width="4" height="4" fill="#000"/><rect x="435" y="353" width="4" height="4" fill="#000"/><rect x="535" y="353" width="4" height="4" fill="#000"/><rect x="435" y="365" width="4" height="4" fill="#000"/><rect x="485" y="365" width="4" height="4" fill="#000"/><rect x="535" y="365" width="4" height="4" fill="#000"/><text x="449" y="359" font-size="11" fill="#0000F0">operating_sy...</text><path d="M487.5 369 V399.5 H507.5 V410" fill="none" stroke="#000"/><text x="517" y="409" font-size="11">operatingSystemResult</text><path d="M672.5 318 L692 337 L672.5 356 L653 337Z" fill="#00C8F8"/><rect x="627.5" y="327.5" width="89" height="19" fill="#00C8F8" stroke="#000"/><path d="M672.5 318 L691.5 337 L672.5 356 L653.5 337Z" fill="#00C8F8"/><text x="676" y="341" text-anchor="middle" font-size="11">query10</text><path d="M672.5 356 V397.5 H686.5 V410" fill="none" stroke="#000"/><circle cx="848.5" cy="201.5" r="11.5" fill="#06062E"/><text x="848.5" y="205.5" text-anchor="middle" fill="#fff" font-size="11">S</text><path d="M842.5 213 V239.5 H807.5 V260" fill="none" stroke="#000"/><path d="M802 260 H813 L807.5 270Z"/><text x="817" y="247.5" font-size="11">bug</text><rect x="757.5" y="270.5" width="100" height="23" fill="#fff" stroke="#000"/><text x="781.5" y="285.5" font-size="11" fill="#0000F0">show_bug</text><path d="M807.5 294 V327 H808.5 V351" fill="none" stroke="#000"/><path d="M803 351 H814 L808.5 361Z"/><circle cx="809" cy="372.5" r="11" fill="#fff" stroke="#000"/><circle cx="809" cy="372.5" r="9" fill="#06062E"/></g></svg>
<div class="a" style="left:849px;top:125px;width:17px;height:283px;background:linear-gradient(90deg,#F3F1EC,#FEFEFB)"></div>
<div class="a" style="left:850px;top:126px;width:15px;height:15px;border:1px solid #BCCCF4;border-radius:2px;background:linear-gradient(135deg,#E0EAFE,#BCD0FA)"></div>
<svg class="a" style="left:853px;top:130px" width="9" height="6"><path d="M1 5 L4.5 1.5 L8 5" stroke="#4D6185" stroke-width="2" fill="none"/></svg>
<div class="a" style="left:850px;top:142px;width:15px;height:142px;border:1px solid #B4C8F6;border-radius:2px;background:linear-gradient(90deg,#C8D8FC,#BCD0FA 60%,#B0C8F8)"></div>
<svg class="a" style="left:854px;top:209px" width="8" height="8"><path d="M0 0.5 H7 M0 2.5 H7 M0 4.5 H7 M0 6.5 H7" stroke="#EEF4FE"/><path d="M1 1.5 H8 M1 3.5 H8 M1 5.5 H8 M1 7.5 H8" stroke="#8CB0F8"/></svg>
<div class="a" style="left:850px;top:392px;width:15px;height:15px;border:1px solid #BCCCF4;border-radius:2px;background:linear-gradient(135deg,#E0EAFE,#BCD0FA)"></div>
<svg class="a" style="left:853px;top:397px" width="9" height="6"><path d="M1 1 L4.5 4.5 L8 1" stroke="#4D6185" stroke-width="2" fill="none"/></svg>
<div class="a" style="left:417px;top:408px;width:432px;height:16px;background:linear-gradient(#F3F1EC,#FEFEFB)"></div>
<div class="a" style="left:418px;top:409px;width:15px;height:14px;border:1px solid #BCCCF4;border-radius:2px;background:linear-gradient(135deg,#E0EAFE,#BCD0FA)"></div>
<svg class="a" style="left:422px;top:411px" width="6" height="9"><path d="M5 1 L1.5 4.5 L5 8" stroke="#4D6185" stroke-width="2" fill="none"/></svg>
<div class="a" style="left:434px;top:409px;width:307px;height:14px;border:1px solid #B4C8F6;border-radius:2px;background:linear-gradient(#C8D8FC,#BCD0FA 60%,#B0C8F8)"></div>
<svg class="a" style="left:584px;top:412px" width="8" height="8"><path d="M0.5 0 V7 M2.5 0 V7 M4.5 0 V7 M6.5 0 V7" stroke="#EEF4FE"/><path d="M1.5 1 V8 M3.5 1 V8 M5.5 1 V8 M7.5 1 V8" stroke="#8CB0F8"/></svg>
<div class="a" style="left:833px;top:409px;width:15px;height:14px;border:1px solid #BCCCF4;border-radius:2px;background:linear-gradient(135deg,#E0EAFE,#BCD0FA)"></div>
<svg class="a" style="left:838px;top:411px" width="6" height="9"><path d="M1 1 L4.5 4.5 L1 8" stroke="#4D6185" stroke-width="2" fill="none"/></svg>
<div class="a" style="left:849px;top:408px;width:17px;height:16px;background:#ECE9D8"></div>
<div class="a" style="left:285px;top:431px;width:97px;height:22px;border-radius:3px 0 0 0;background:linear-gradient(#FFFFFF,#ECE9D8)"></div>
<div class="a" style="left:382px;top:431px;width:1px;height:22px;background:#A09C88"></div>
<div class="a" style="left:427px;top:431px;width:1px;height:22px;background:#A09C88"></div>
<div class="a" style="left:478px;top:431px;width:1px;height:22px;background:#A09C88"></div>
<div class="a" style="left:517px;top:431px;width:1px;height:22px;background:#A09C88"></div>
<div class="a" style="left:559px;top:431px;width:1px;height:22px;background:#A09C88"></div>
<div class="a" style="left:612px;top:431px;width:1px;height:22px;background:#A09C88"></div>
<div class="a" style="left:659px;top:431px;width:1px;height:22px;background:#A09C88"></div>
<div class="a" style="left:382px;top:452px;width:486px;height:1px;background:#A09C88"></div>
<svg class="a" style="left:290px;top:436px" width="12" height="12"><rect x="0.5" y="0.5" width="11" height="11" fill="#E6F0FA" stroke="#5A7AA0"/><rect x="1" y="1" width="10" height="2" fill="#3A78C8"/></svg>
<div class="t" style="left:307px;top:437px">Properties</div>
<svg class="a" style="left:366px;top:437px" width="11" height="11"><path d="M2 2 L8 8 M8 2 L2 8" stroke="#6E6C60" stroke-width="3.4" stroke-linecap="square"/><path d="M2 2 L8 8 M8 2 L2 8" stroke="#fff" stroke-width="1.5" stroke-linecap="square"/></svg>
<div class="t" style="left:387px;top:437px">Servers</div>
<div class="t" style="left:431px;top:437px">Problems</div>
<div class="t" style="left:482px;top:437px">Debug</div>
<div class="t" style="left:521px;top:437px">Search</div>
<div class="t" style="left:562px;top:437px">Hierarchy</div>
<div class="t" style="left:616px;top:437px">Console</div>
<svg class="a" style="left:834px;top:435px" width="10" height="4"><use href="#minbtn"/></svg>
<svg class="a" style="left:852px;top:435px" width="10" height="10"><use href="#maxbtn"/></svg>
<div class="a" style="left:288px;top:462px;width:578px;height:238px;border:1px solid #ACA899;box-shadow:inset 1px 1px 0 #fff,1px 1px 0 #fff"></div>
<div class="a" style="left:294px;top:456px;width:46px;height:13px;background:#ECE9D8"></div>
<div class="t" style="left:296px;top:457px">Selection</div>
<div class="t" style="left:300px;top:483px">Name</div>
<div class="a" style="left:342px;top:479px;width:267px;height:19px;border:1px solid;border-color:#ACA899 #FFFFFF #FFFFFF #ACA899;box-shadow:inset 1px 1px 0 #716F64,inset -1px -1px 0 #F1EFE2;background:#fff"></div>
<div class="t" style="left:348px;top:483px">operating_system</div>
<div class="t" style="left:300px;top:534px">Text</div>
<div class="a" style="left:342px;top:503px;width:267px;height:72px;border:1px solid;border-color:#ACA899 #FFFFFF #FFFFFF #ACA899;box-shadow:inset 1px 1px 0 #716F64,inset -1px -1px 0 #F1EFE2;background:#fff"></div>
<div class="t" style="left:348px;top:507px">Please select the operating system you are using</div>
<div class="a" style="left:344px;top:557px;width:263px;height:17px;background:linear-gradient(#F2F1EC,#FEFEFB)"></div>
<div class="a" style="left:345px;top:558px;width:15px;height:15px;border:1px solid #E8E6DC;border-radius:2px;background:linear-gradient(135deg,#F4F3EE,#E6E4DA)"></div>
<svg class="a" style="left:349px;top:561px" width="6" height="9"><path d="M5 1 L1.5 4.5 L5 8" stroke="#C4C2B6" stroke-width="2" fill="none"/></svg>
<div class="a" style="left:591px;top:558px;width:15px;height:15px;border:1px solid #E8E6DC;border-radius:2px;background:linear-gradient(135deg,#F4F3EE,#E6E4DA)"></div>
<svg class="a" style="left:596px;top:561px" width="6" height="9"><path d="M1 1 L4.5 4.5 L1 8" stroke="#C4C2B6" stroke-width="2" fill="none"/></svg>
<div class="t" style="left:300px;top:590px">Choices</div>
<div class="a" style="left:342px;top:586px;width:16px;height:23px;border:1px solid;border-color:#FFFFFF #716F64 #716F64 #FFFFFF;box-shadow:inset -1px -1px 0 #ACA899,inset 1px 1px 0 #F1EFE2;background:#ECE9D8"></div>
<div class="t" style="left:347px;top:591px">-</div>
<div class="a" style="left:363px;top:588px;width:221px;height:19px;border:1px solid;border-color:#ACA899 #FFFFFF #FFFFFF #ACA899;box-shadow:inset 1px 1px 0 #716F64,inset -1px -1px 0 #F1EFE2;background:#ECE9D8"></div>
<div class="t" style="left:377px;top:592px">3</div>
<div class="a" style="left:590px;top:586px;width:20px;height:23px;border:1px solid;border-color:#FFFFFF #716F64 #716F64 #FFFFFF;box-shadow:inset -1px -1px 0 #ACA899,inset 1px 1px 0 #F1EFE2;background:#ECE9D8"></div>
<div class="t" style="left:596px;top:591px">+</div>
<div class="a" style="left:625px;top:481px;width:13px;height:13px;border:1px solid;border-color:#ACA899 #fff #fff #ACA899;box-shadow:inset 1px 1px 0 #716F64,inset -1px -1px 0 #F1EFE2;background:#fff"></div>
<div class="t" style="left:642px;top:481px">Pre-Code</div>
<div class="a" style="left:625px;top:511px;width:13px;height:13px;border:1px solid;border-color:#ACA899 #fff #fff #ACA899;box-shadow:inset 1px 1px 0 #716F64,inset -1px -1px 0 #F1EFE2;background:#fff"></div>
<div class="t" style="left:642px;top:511px">Post-Code</div>
<div class="t" style="left:305px;top:620px">1:</div>
<div class="a" style="left:320px;top:616px;width:254px;height:18px;border:1px solid;border-color:#ACA899 #FFFFFF #FFFFFF #ACA899;box-shadow:inset 1px 1px 0 #716F64,inset -1px -1px 0 #F1EFE2;background:#fff"></div>
<div class="t" style="left:326px;top:620px">Windows</div>
<div class="t" style="left:305px;top:646px">2:</div>
<div class="a" style="left:320px;top:642px;width:254px;height:19px;border:1px solid;border-color:#ACA899 #FFFFFF #FFFFFF #ACA899;box-shadow:inset 1px 1px 0 #716F64,inset -1px -1px 0 #F1EFE2;background:#fff"></div>
<div class="t" style="left:326px;top:646px">Linux</div>
<div class="a" style="left:580px;top:640px;width:25px;height:23px;border:1px solid;border-color:#FFFFFF #716F64 #716F64 #FFFFFF;box-shadow:inset -1px -1px 0 #ACA899,inset 1px 1px 0 #F1EFE2;background:#ECE9D8"></div>
<div class="t" style="left:585px;top:645px">Up</div>
<div class="t" style="left:305px;top:674px">3:</div>
<div class="a" style="left:320px;top:670px;width:254px;height:19px;border:1px solid;border-color:#ACA899 #FFFFFF #FFFFFF #ACA899;box-shadow:inset 1px 1px 0 #716F64,inset -1px -1px 0 #F1EFE2;background:#fff"></div>
<div class="t" style="left:326px;top:674px">Mac OSX</div>
<div class="a" style="left:580px;top:668px;width:25px;height:23px;border:1px solid;border-color:#FFFFFF #716F64 #716F64 #FFFFFF;box-shadow:inset -1px -1px 0 #ACA899,inset 1px 1px 0 #F1EFE2;background:#ECE9D8"></div>
<div class="t" style="left:585px;top:673px">Up</div>
<div class="a" style="left:10px;top:461px;width:82px;height:22px;border-radius:3px 0 0 0;background:linear-gradient(#FFFFFF,#ECE9D8)"></div>
<div class="a" style="left:92px;top:461px;width:1px;height:22px;background:#A09C88"></div>
<div class="a" style="left:92px;top:482px;width:188px;height:1px;background:#A09C88"></div>
<svg class="a" style="left:14px;top:463px" width="16" height="17"><rect x="1.5" y="1.5" width="5" height="5" fill="#C4E2FC" stroke="#1A5AA8"/><rect x="1.5" y="10.5" width="5" height="5" fill="#C4E2FC" stroke="#1A5AA8"/><rect x="8.5" y="7.5" width="2" height="2" fill="#fff" stroke="#1A5AA8"/><path d="M8 4.5 H14 M8 13.5 H14 M12 8.5 H14" stroke="#1A5AA8"/></svg>
<div class="t" style="left:33px;top:467px">Outline</div>
<svg class="a" style="left:76px;top:467px" width="11" height="11"><path d="M2 2 L8 8 M8 2 L2 8" stroke="#6E6C60" stroke-width="3.4" stroke-linecap="square"/><path d="M2 2 L8 8 M8 2 L2 8" stroke="#fff" stroke-width="1.5" stroke-linecap="square"/></svg>
<svg class="a" style="left:246px;top:464px" width="10" height="4"><use href="#minbtn"/></svg>
<svg class="a" style="left:264px;top:464px" width="10" height="10"><use href="#maxbtn"/></svg>
<div class="a" style="left:15px;top:489px;width:236px;height:209px;background:#fff"></div>
<style>.ol text{font-size:10px}</style><svg class="a ol" style="left:15px;top:489px;font-family:Liberation Sans" width="236" height="209"><g transform="scale(0.422) translate(-417,-125)"><defs><marker id="arr" markerWidth="11" markerHeight="11" refX="5.5" refY="10" orient="0" markerUnits="userSpaceOnUse"><path d="M0 0 L11 0 L5.5 11Z" fill="#000"/></marker></defs><circle cx="489" cy="159" r="11.5" fill="#06062E"/><text x="489" y="163" text-anchor="middle" fill="#fff" font-size="11">S</text><text x="504.5" y="163" font-size="11" fill="#909090">main_start</text><path d="M496.5 170 V199.5 H552.5 V224" fill="none" stroke="#000" vector-effect="non-scaling-stroke" stroke-width="1"/><path d="M547 224 H558 L552.5 235Z"/><path d="M542 244 L551 235 L560 244Z" fill="#C898C8"/><rect x="507.5" y="244.5" width="89" height="19" fill="#C898C8" stroke="#000" vector-effect="non-scaling-stroke" stroke-width="1"/><rect x="512.5" y="263.5" width="79" height="19" fill="#C898C8" stroke="#000" vector-effect="non-scaling-stroke" stroke-width="1"/><rect x="512.5" y="282.5" width="79" height="19" fill="#C898C8" stroke="#000" vector-effect="non-scaling-stroke" stroke-width="1"/><text x="540.5" y="258" font-size="11" fill="#909090" textLength="31" lengthAdjust="spacingAndGlyphs">menu1</text><text x="531" y="277" font-size="11" fill="#909090" textLength="40.5" lengthAdjust="spacingAndGlyphs">SEARCH</text><text x="532.5" y="296" font-size="11" fill="#909090" textLength="37" lengthAdjust="spacingAndGlyphs">SUBMIT</text><rect x="592.5" y="270.5" width="4" height="5" fill="#C898C8" stroke="#000" vector-effect="non-scaling-stroke" stroke-width="1"/><rect x="507.5" y="289.5" width="4" height="5" fill="#C898C8" stroke="#000" vector-effect="non-scaling-stroke" stroke-width="1"/><path d="M597 273.5 H672.5 V307" fill="none" stroke="#000" vector-effect="non-scaling-stroke" stroke-width="1"/><path d="M667 307 H678 L672.5 318Z"/><path d="M507 292.5 H487.5 V334" fill="none" stroke="#000" vector-effect="non-scaling-stroke" stroke-width="1"/><path d="M482 334 H493 L487.5 341Z"/><path d="M443 343 H531 Q537 343 537 350 V360 Q537 367 531 367 H443 Q437 367 437 360 V350 Q437 343 443 343Z" fill="#66F6C8"/><path d="M442 343 H532 M442 367 H532" stroke="#000" vector-effect="non-scaling-stroke" stroke-width="1" stroke-width="2"/><path d="M444 343.5 Q438.5 343.5 438.5 350 V360 Q438.5 366.5 444 366.5 M530 343.5 Q535.5 343.5 535.5 350 V360 Q535.5 366.5 530 366.5" fill="none" stroke="#000" vector-effect="non-scaling-stroke" stroke-width="1" /><text x="449" y="359" font-size="11" fill="#7A7AF8">operating_sy...</text><path d="M487.5 369 V399.5 H507.5 V410" fill="none" stroke="#000" vector-effect="non-scaling-stroke" stroke-width="1"/><text x="517" y="409" font-size="11" fill="#909090">operatingSystemResult</text><path d="M672.5 318 L692 337 L672.5 356 L653 337Z" fill="#00C8F8"/><rect x="627.5" y="327.5" width="89" height="19" fill="#00C8F8" stroke="#000" vector-effect="non-scaling-stroke" stroke-width="1"/><path d="M672.5 318 L691.5 337 L672.5 356 L653.5 337Z" fill="#00C8F8"/><text x="676" y="341" text-anchor="middle" font-size="11" fill="#909090">query10</text><path d="M672.5 356 V397.5 H686.5 V410" fill="none" stroke="#000" vector-effect="non-scaling-stroke" stroke-width="1"/><circle cx="848.5" cy="201.5" r="11.5" fill="#06062E"/><text x="848.5" y="205.5" text-anchor="middle" fill="#fff" font-size="11">S</text><path d="M842.5 213 V239.5 H807.5 V260" fill="none" stroke="#000" vector-effect="non-scaling-stroke" stroke-width="1"/><path d="M802 260 H813 L807.5 270Z"/><text x="817" y="247.5" font-size="11" fill="#909090">bug</text><rect x="757.5" y="270.5" width="100" height="23" fill="#fff" stroke="#000" vector-effect="non-scaling-stroke" stroke-width="1"/><text x="781.5" y="285.5" font-size="11" fill="#7A7AF8">show_bug</text><path d="M807.5 294 V327 H808.5 V351" fill="none" stroke="#000" vector-effect="non-scaling-stroke" stroke-width="1"/><path d="M803 351 H814 L808.5 361Z"/><circle cx="809" cy="372.5" r="11" fill="#fff" stroke="#000" vector-effect="non-scaling-stroke" stroke-width="1"/><circle cx="809" cy="372.5" r="9" fill="#06062E"/><text x="864" y="205" font-size="11" fill="#909090">show_bug</text><path d="M507.5 410 V420" fill="none" stroke="#000" vector-effect="non-scaling-stroke" stroke-width="1"/><path d="M502 420 H513 L507.5 431Z"/><rect x="456" y="432" width="100" height="24" rx="11" fill="#FFFF66" stroke="#000" vector-effect="non-scaling-stroke" stroke-width="1" stroke-width="2"/><text x="480" y="448" font-size="11" fill="#7A7AF8">user_input</text><path d="M507.5 457 V524" fill="none" stroke="#000" vector-effect="non-scaling-stroke" stroke-width="1"/><path d="M502 524 H513 L507.5 535Z"/><text x="517" y="502" font-size="11" fill="#909090">operatingSystemResult</text><text x="517" y="514" font-size="11" fill="#909090">keywords</text><text x="517" y="526" font-size="11" fill="#909090">description</text><rect x="456" y="536" width="100" height="24" rx="2" fill="#FF9966" stroke="#000" vector-effect="non-scaling-stroke" stroke-width="1" stroke-width="2"/><text x="480" y="552" font-size="11" fill="#7A7AF8">show_bug</text><path d="M507.5 561 V586" fill="none" stroke="#000" vector-effect="non-scaling-stroke" stroke-width="1"/><path d="M502 586 H513 L507.5 597Z"/><circle cx="508" cy="608" r="11" fill="#fff" stroke="#000" vector-effect="non-scaling-stroke" stroke-width="1"/><circle cx="508" cy="608" r="9" fill="#06062E"/><path d="M686.5 410 V430" fill="none" stroke="#000" vector-effect="non-scaling-stroke" stroke-width="1"/><path d="M681 430 H692 L686.5 441Z"/><circle cx="687" cy="452" r="11" fill="#fff" stroke="#000" vector-effect="non-scaling-stroke" stroke-width="1"/><circle cx="687" cy="452" r="9" fill="#06062E"/></g></svg>
<div class="a" style="left:15px;top:489px;width:183px;height:120px;background:rgba(40,90,200,0.2);border:1px solid #3A70D8"></div>
<svg class="a" style="left:10px;top:79px" width="16" height="15"><defs><linearGradient id="opg" x1="0" x2="1"><stop offset="0" stop-color="#2A66C0"/><stop offset="1" stop-color="#B0D4F8"/></linearGradient></defs><rect x="0.5" y="2.5" width="11" height="11" fill="#EAF6FC" stroke="#9A8050"/><path d="M0.5 13.5 H11.5" stroke="#5A5850"/><rect x="1" y="2" width="10" height="2.5" fill="url(#opg)"/><path d="M4.5 5 V13 M1 9.5 H4 M5 8.5 H11" stroke="#A09070"/><path d="M10.5 0 L14 3.5 L10.5 7 L7 3.5Z" fill="#B88A10"/><path d="M10.5 1 V6 M8 3.5 H13" stroke="#FFF0B0"/></svg>
<div class="a" style="left:28px;top:75px;width:78px;height:22px;border:1px solid;border-color:#A8A490 #fff #fff #A8A490;background:repeating-conic-gradient(#FCFBF6 0 25%,#E6E3D4 0 50%) 0 0/2px 2px"></div>
<svg class="a" style="left:37px;top:80px" width="12" height="14"><use href="#gpage"/></svg>
<div class="t" style="left:52px;top:81px">ChatApps</div>
<svg class="a" style="left:112px;top:78px" width="17" height="15"><path d="M0.5 0.5 L6.5 0.5 L8.5 2.5 L8.5 10.5 L0.5 10.5Z" fill="#F0F4FC" stroke="#9A8A60"/><path d="M2 3.5 H6 M2 5.5 H6 M2 7.5 H5" stroke="#5A7AC0"/><path d="M4.5 6.5 L4.5 5.5 L8 5.5 L9 6.5 L15.5 6.5 L15.5 14.5 L4.5 14.5Z" fill="#FCD890" stroke="#B07020"/><path d="M4.5 8.5 H15.5" stroke="#E0A050"/></svg>
<div class="t" style="left:129px;top:80px">Resource</div>
</body></html>
